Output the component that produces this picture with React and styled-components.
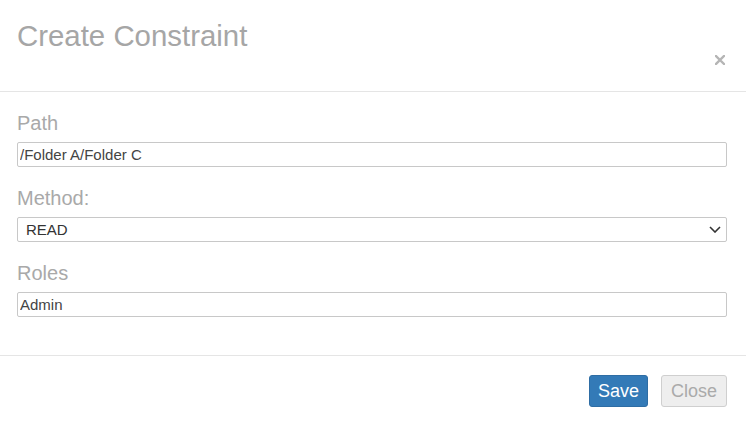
import React from "react";
import styled, { createGlobalStyle } from "styled-components";

const Global = createGlobalStyle`
  html, body { margin: 0; padding: 0; background: #fff; }
  body { font-family: "Liberation Sans", Arial, sans-serif; }
  * { box-sizing: border-box; }
`;

const Dialog = styled.div`
  width: 746px;
  height: 424px;
  background: #fff;
  display: flex;
  flex-direction: column;
`;

const Header = styled.div`
  height: 92px;
  border-bottom: 1px solid #e5e5e5;
  display: flex;
  justify-content: space-between;
  align-items: flex-start;
  padding: 19px 21px 0 17px;
`;

const Title = styled.h4`
  margin: 0;
  font-size: 29.4px;
  line-height: 1.15;
  font-weight: normal;
  color: #a6a6a6;
`;

const CloseX = styled.button`
  margin-top: 36px;
  padding: 0;
  border: 0;
  background: none;
  width: 10px;
  height: 10px;
  display: block;
  cursor: pointer;
  svg { display: block; }
`;

const Body = styled.div`
  padding: 20px 19px 38px 17px;
  display: flex;
  flex-direction: column;
  gap: 20px;
  border-bottom: 1px solid #e5e5e5;
`;

const Group = styled.div`
  display: flex;
  flex-direction: column;
`;

const Label = styled.label`
  font-size: 20px;
  line-height: 23px;
  color: #a9a9a9;
  margin-bottom: 7px;
`;

const TextInput = styled.input`
  width: 100%;
  height: 25px;
  border: 1px solid #c8c8c8;
  border-radius: 2px;
  padding: 0 2px;
  font-family: "Liberation Sans", Arial, sans-serif;
  font-size: 15px;
  color: #444;
  background: #fff;
  outline: none;
`;

const SelectWrap = styled.div`
  position: relative;
  width: 100%;
`;

const Select = styled.select`
  width: 100%;
  height: 25px;
  border: 1px solid #c8c8c8;
  border-radius: 2px;
  padding: 0 8px;
  font-family: "Liberation Sans", Arial, sans-serif;
  font-size: 15px;
  color: #333;
  background: #fff;
  appearance: none;
  outline: none;
`;

const Chevron = styled.svg`
  position: absolute;
  right: 6px;
  top: 9px;
  pointer-events: none;
`;

const Footer = styled.div`
  flex: 1;
  display: flex;
  justify-content: flex-end;
  align-items: flex-start;
  gap: 13px;
  padding: 19px 19px 0 0;
`;

const Button = styled.button`
  height: 32px;
  padding: 0 ${(p) => (p.$primary ? "8px" : "9px")};
  font-family: "Liberation Sans", Arial, sans-serif;
  font-size: 18px;
  line-height: 1;
  border-radius: 3px;
  border: 1px solid ${(p) => (p.$primary ? "#2e6da4" : "#cfcfcf")};
  background: ${(p) => (p.$primary ? "#337ab7" : "#eeeeee")};
  color: ${(p) => (p.$primary ? "#fff" : "#aaa")};
  cursor: pointer;
`;

export default function App() {
  return (
    <>
      <Global />
      <Dialog>
        <Header>
          <Title>Create Constraint</Title>
          <CloseX aria-label="Close">
            <svg width="10" height="10" viewBox="0 0 10 10">
              <path d="M1 1 L9 9 M9 1 L1 9" stroke="#b5b5b5" strokeWidth="2.4" strokeLinecap="square" />
            </svg>
          </CloseX>
        </Header>
        <Body>
          <Group>
            <Label>Path</Label>
            <TextInput defaultValue="/Folder A/Folder C" />
          </Group>
          <Group>
            <Label>Method:</Label>
            <SelectWrap>
              <Select defaultValue="READ">
                <option>READ</option>
                <option>WRITE</option>
              </Select>
              <Chevron width="12" height="7" viewBox="0 0 12 7">
                <path d="M1 1 L6 6 L11 1" fill="none" stroke="#333" strokeWidth="1.6" />
              </Chevron>
            </SelectWrap>
          </Group>
          <Group>
            <Label>Roles</Label>
            <TextInput defaultValue="Admin" />
          </Group>
        </Body>
        <Footer>
          <Button $primary>Save</Button>
          <Button>Close</Button>
        </Footer>
      </Dialog>
    </>
  );
}
